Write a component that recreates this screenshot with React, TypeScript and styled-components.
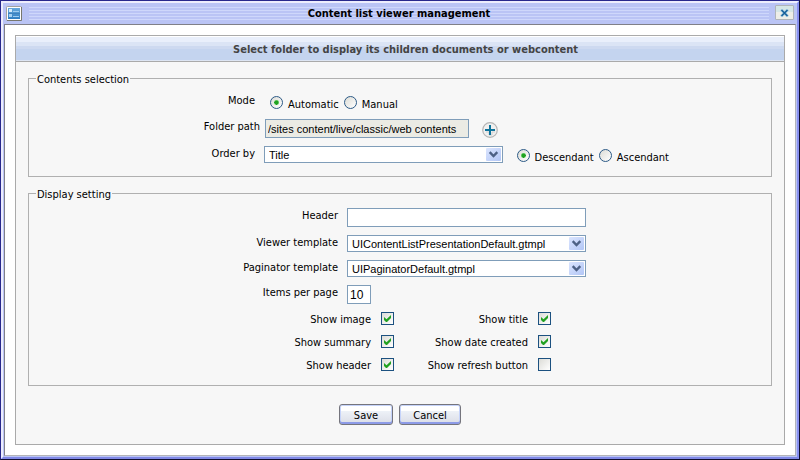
import React, { useId } from "react";
import styled, { createGlobalStyle, css } from "styled-components";

const uiFont = `"DejaVu Sans Condensed", "Noto Sans", sans-serif`;
const fieldFont = `"Liberation Sans", Arial, sans-serif`;
const fieldBorder = "#7f9db9";
const line = "#b0b0b0";

const GlobalStyle = createGlobalStyle`
  *, *::before, *::after { box-sizing: border-box; }
  body { margin: 0; background: #fff; color: #000; font: 11px/16px ${uiFont}; }
`;

const Frame = styled.div`
  min-height: 100vh;
  display: flex;
  border: 1px solid #28288c;
  border-right-color: #101030;
  border-bottom-color: #101030;
`;

const Bevel = styled.div`
  flex: 1;
  display: flex;
  flex-direction: column;
  background: #bac4f5;
  border: 2px solid #ededfd;
  border-right-color: #8890f0;
  border-bottom-color: #8088e6;
`;

const TitleBar = styled.header`
  display: flex;
  align-items: center;
  gap: 6px;
  height: 21px;
  padding: 0 3px;
`;

const Title = styled.h1`
  flex: 1;
  margin: 0;
  height: 13px;
  font: bold 11px/13px ${uiFont};
  text-align: center;
  background: repeating-linear-gradient(#ced7fb 0 1px, transparent 1px 3px);
`;

const CloseButton = styled.button`
  display: flex;
  align-items: center;
  justify-content: center;
  width: 19px;
  height: 15px;
  margin-bottom: 2px;
  padding: 0;
  border: 1px solid #b0b4b8;
  border-radius: 1px;
  background: linear-gradient(#d5e6e6 0 50%, #eeeee8 50%);
`;

const Body = styled.main`
  flex: 1;
  display: flex;
  margin: 0 1px 1px;
  padding: 10px;
  background: #fff;
  border: 1px solid #808088;
  border-right-color: #b4b4b8;
  border-bottom-color: #b4b4b8;
`;

const Panel = styled.section`
  flex: 1;
  border: 1px solid #aaa;
  background: #f7f7f7;
`;

const PanelTitle = styled.h2`
  margin: 0;
  height: 26px;
  padding-left: 11px;
  color: #444;
  font: bold 11px/25px ${uiFont};
  text-align: center;
  border-top: 1px solid #fff;
  border-bottom: 1px solid #aaa;
  background: linear-gradient(#e9effb 0 5px, #dbe4f5 5px 9px, #cdd9f0 9px 12px, #c4d4ef 12px 23px, #dde5f3 23px);
`;

const Form = styled.form`
  display: flex;
  flex-direction: column;
  gap: 10px;
  padding: 10px 12px 19px;
`;

const Group = styled.fieldset`
  min-width: 0;
  margin: 0;
  padding: 0;
  border: 1px solid ${line};
`;

const Legend = styled.legend`
  height: 13px;
  margin-left: 7px;
  padding: 0 1px;
  line-height: 15px;
`;

const Rows = styled.div<{ $gap: number; $bottom: number }>`
  display: grid;
  gap: ${(p) => p.$gap}px;
  justify-content: center;
  padding: 8px 0 ${(p) => p.$bottom}px;
`;

const Row = styled.div<{ $wide?: boolean }>`
  display: grid;
  grid-template-columns: 133px ${(p) => (p.$wide ? 405 : 239)}px;
  align-items: start;
`;

const labelText = css`
  text-align: right;
  white-space: nowrap;
`;

const RowLabel = styled.label<{ $tight?: boolean }>`
  ${labelText}
  padding-right: ${(p) => (p.$tight ? 4 : 9)}px;
`;

const RowCaption = styled.span`
  ${labelText}
  padding-right: 9px;
`;

const Controls = styled.div<{ $between?: boolean }>`
  display: flex;
  align-items: flex-start;
  justify-content: ${(p) => (p.$between ? "space-between" : "flex-start")};
`;

const Radios = styled.div`
  display: flex;
  gap: 5px;
  padding: 3px 0 0 6px;
`;

const RadioLabel = styled.label`
  display: flex;
  gap: 5px;
  line-height: 14px;
  white-space: nowrap;
`;

const RadioText = styled.span`
  padding-top: 2px;
`;

const Radio = styled.input.attrs({ type: "radio" })`
  appearance: none;
  width: 13px;
  height: 13px;
  margin: 0;
  border: 1px solid #2c5a86;
  border-radius: 50%;
  background: linear-gradient(135deg, #dcdcd6, #fff);
  &:checked {
    background: radial-gradient(circle, #21a121 0 2px, #55c455 2px, transparent 3px),
      linear-gradient(135deg, #dcdcd6, #fff);
  }
`;

const TextBox = styled.input.attrs({ type: "text" })<{ $size: "path" | "full" | "tiny" }>`
  width: ${(p) => ({ path: 204, full: 239, tiny: 24 })[p.$size]}px;
  height: 19px;
  margin: 0 0 0 ${(p) => (p.$size === "path" ? 1 : 0)}px;
  padding: 0 2px;
  border: 1px solid ${fieldBorder};
  border-radius: 0;
  background: ${(p) => (p.readOnly ? "#ebebe4" : "#fff")};
  color: #000;
  font: ${(p) => (p.$size === "tiny" ? 12 : 11)}px ${fieldFont};
`;

const IconButton = styled.button`
  display: flex;
  margin: 3px 0 0 13px;
  padding: 0;
  border: 0;
  background: none;
`;

const SelectBox = styled.div`
  display: grid;
  grid-template: 17px / 239px;
  align-items: center;
  > * { grid-area: 1 / 1; }
  > svg { justify-self: end; margin-right: 2px; pointer-events: none; }
`;

const Select = styled.select`
  appearance: none;
  width: 100%;
  height: 17px;
  margin: 0;
  padding: 0 18px 0 4px;
  border: 1px solid ${fieldBorder};
  border-radius: 0;
  background: #fff;
  color: #000;
  font: 11px ${fieldFont};
`;

const Checks = styled.div`
  display: grid;
  grid-template-columns: 122px 13px 124px 13px;
  gap: 10px;
  justify-content: center;
`;

const CheckLabel = styled.label`
  ${labelText}
  height: 13px;
  line-height: 15px;
`;

const CheckBox = styled.span`
  display: grid;
  > * { grid-area: 1 / 1; }
  > svg { visibility: hidden; pointer-events: none; }
  > input:checked + svg { visibility: visible; }
`;

const CheckInput = styled.input.attrs({ type: "checkbox" })`
  appearance: none;
  width: 13px;
  height: 13px;
  margin: 0;
  border: 1px solid #1c5180;
  background: linear-gradient(135deg, #dcdcd7, #fff);
`;

const Actions = styled.div`
  display: flex;
  justify-content: center;
  gap: 6px;
  padding-top: 8px;
`;

const ActionButton = styled.button<{ $wide?: boolean }>`
  width: ${(p) => (p.$wide ? 62 : 54)}px;
  height: 21px;
  padding: 2px 0 0;
  border: 1px solid #75757d;
  border-radius: 3px;
  background: linear-gradient(#fff 0 30%, #eef2f8 30%, #dadde6);
  box-shadow: inset 0 -2px #8d9be8, inset 0 0 0 1px #c5d3fa;
  color: #000;
  font: 11px/17px ${uiFont};
`;

function WindowIcon() {
  return (
    <svg width="17" height="16" viewBox="0 0 17 16" aria-hidden="true">
      <defs>
        <linearGradient id="win" x1="0" y1="0" x2="0" y2="1">
          <stop offset="0" stopColor="#69a9dc" />
          <stop offset="1" stopColor="#2f7ec2" />
        </linearGradient>
      </defs>
      <rect x="0.5" y="0.5" width="15" height="14" rx="1" fill="#fff" stroke="#a3a3a0" />
      <path d="M1 14.500h14.500V1" fill="none" stroke="#77776f" />
      <rect x="2" y="2" width="12" height="11" fill="url(#win)" />
      <path d="M3 3h3v3H3z" fill="#d4ebfc" />
      <path d="M3 8h3v3H3z" fill="#a6d2f4" />
      <path d="M7 5.500h6M7 10.500h6" stroke="#a0cdf0" />
      <path d="M2 7.500h12" stroke="#2b69a5" opacity="0.4" />
    </svg>
  );
}

function CloseIcon() {
  return (
    <svg width="9" height="8" viewBox="0 0 9 8" aria-hidden="true">
      <path d="M1 .5l7 7M8 .5l-7 7" stroke="#a7cde2" strokeWidth="3" />
      <path d="M1.500 1l6 6M7.500 1l-6 6" stroke="#17609a" strokeWidth="1.500" />
    </svg>
  );
}

function PlusIcon() {
  return (
    <svg width="17" height="17" viewBox="0 0 17 17" aria-hidden="true">
      <circle cx="8" cy="8" r="7.300" fill="#f0f0f0" stroke="#b5b5b5" strokeWidth="1.200" />
      <path d="M4 10h3v3h3v-3h3" fill="none" stroke="#d0d0d0" />
      <path d="M8 3v10M3 8h10" stroke="#0f749c" strokeWidth="2" />
    </svg>
  );
}

function ArrowIcon() {
  return (
    <svg width="15" height="13" viewBox="0 0 15 13" aria-hidden="true">
      <defs>
        <linearGradient id="arrow" x1="0" y1="0" x2="1" y2="1">
          <stop offset="0" stopColor="#dbe5fe" />
          <stop offset="1" stopColor="#b2c6f6" />
        </linearGradient>
      </defs>
      <rect width="15" height="13" rx="1" fill="url(#arrow)" />
      <path d="M3.700 4.200l3.800 3.800 3.800-3.800" fill="none" stroke="#4d6185" strokeWidth="2.400" />
    </svg>
  );
}

function Tick() {
  return (
    <svg width="13" height="13" viewBox="0 0 13 13" aria-hidden="true">
      <path d="M3 5v3l2 2h1l4-4V3L5.500 7.200z" fill="#21a121" />
    </svg>
  );
}

function RadioOption({ name, text, checked }: { name: string; text: string; checked?: boolean }) {
  return (
    <RadioLabel>
      <Radio name={name} defaultChecked={checked} />
      <RadioText>{text}</RadioText>
    </RadioLabel>
  );
}

function Dropdown({ id, value }: { id: string; value: string }) {
  return (
    <SelectBox>
      <Select id={id} defaultValue={value}>
        <option>{value}</option>
      </Select>
      <ArrowIcon />
    </SelectBox>
  );
}

function CheckOption({ text, checked }: { text: string; checked?: boolean }) {
  const id = useId();
  return (
    <>
      <CheckLabel htmlFor={id}>{text}</CheckLabel>
      <CheckBox>
        <CheckInput id={id} defaultChecked={checked} />
        <Tick />
      </CheckBox>
    </>
  );
}

export default function App() {
  return (
    <>
      <GlobalStyle />
      <Frame>
        <Bevel>
          <TitleBar>
            <WindowIcon />
            <Title>Content list viewer management</Title>
            <CloseButton type="button" aria-label="Close">
              <CloseIcon />
            </CloseButton>
          </TitleBar>
          <Body>
            <Panel>
              <PanelTitle>Select folder to display its children documents or webcontent</PanelTitle>
              <Form onSubmit={(e) => e.preventDefault()}>
                <Group>
                  <Legend>Contents selection</Legend>
                  <Rows $gap={7} $bottom={11}>
                    <Row $wide role="radiogroup" aria-labelledby="mode">
                      <RowCaption id="mode">Mode</RowCaption>
                      <Radios>
                        <RadioOption name="mode" text="Automatic" checked />
                        <RadioOption name="mode" text="Manual" />
                      </Radios>
                    </Row>
                    <Row $wide>
                      <RowLabel $tight htmlFor="path">Folder path</RowLabel>
                      <Controls>
                        <TextBox id="path" $size="path" readOnly value="/sites content/live/classic/web contents" />
                        <IconButton type="button" aria-label="Choose folder">
                          <PlusIcon />
                        </IconButton>
                      </Controls>
                    </Row>
                    <Row $wide>
                      <RowLabel htmlFor="order">Order by</RowLabel>
                      <Controls $between>
                        <Dropdown id="order" value="Title" />
                        <Radios role="radiogroup" aria-label="Direction">
                          <RadioOption name="direction" text="Descendant" checked />
                          <RadioOption name="direction" text="Ascendant" />
                        </Radios>
                      </Controls>
                    </Row>
                  </Rows>
                </Group>
                <Group>
                  <Legend>Display setting</Legend>
                  <Rows $gap={8} $bottom={14}>
                    <Row>
                      <RowLabel htmlFor="header">Header</RowLabel>
                      <TextBox id="header" $size="full" />
                    </Row>
                    <Row>
                      <RowLabel htmlFor="viewer">Viewer template</RowLabel>
                      <Dropdown id="viewer" value="UIContentListPresentationDefault.gtmpl" />
                    </Row>
                    <Row>
                      <RowLabel htmlFor="paginator">Paginator template</RowLabel>
                      <Dropdown id="paginator" value="UIPaginatorDefault.gtmpl" />
                    </Row>
                    <Row>
                      <RowLabel htmlFor="items">Items per page</RowLabel>
                      <TextBox id="items" $size="tiny" defaultValue="10" />
                    </Row>
                    <Checks>
                      <CheckOption text="Show image" checked />
                      <CheckOption text="Show title" checked />
                      <CheckOption text="Show summary" checked />
                      <CheckOption text="Show date created" checked />
                      <CheckOption text="Show header" checked />
                      <CheckOption text="Show refresh button" />
                    </Checks>
                  </Rows>
                </Group>
                <Actions>
                  <ActionButton type="submit">Save</ActionButton>
                  <ActionButton type="button" $wide>Cancel</ActionButton>
                </Actions>
              </Form>
            </Panel>
          </Body>
        </Bevel>
      </Frame>
    </>
  );
}
